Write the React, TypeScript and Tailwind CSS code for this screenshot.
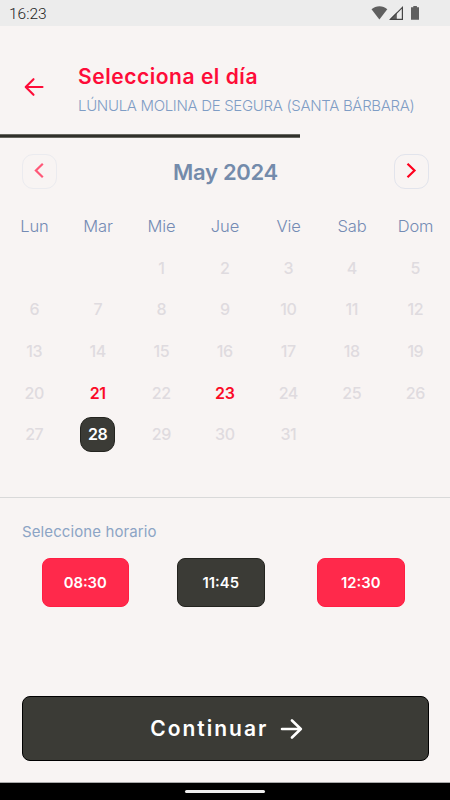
const weekdays = ["Lun", "Mar", "Mie", "Jue", "Vie", "Sab", "Dom"];

const cells: (number | null)[] = [
  null,
  null,
  ...Array.from({ length: 31 }, (_, i) => i + 1),
  null,
  null,
];

function StatusBar() {
  return (
    <div className="flex h-[26px] shrink-0 items-center justify-between bg-[#ececec] pr-[30px] pl-[9px]">
      <span className="pt-[3px] font-['Roboto',sans-serif] text-[15.5px] leading-none font-light text-[#222]">16:23</span>
      <svg width="50" height="16" viewBox="0 0 50 16" className="text-[#5f5f5f]">
        <path d="M1.5 4.3C6 .2 13 .2 17.3 4.3L9.4 14.4Z" fill="currentColor" />
        <path d="M19.5 14.5L26.8 7.2v7.3Z" fill="currentColor" />
        <path d="M20.5 14.3L32.4 2.4V14.3Z" fill="none" stroke="#444" strokeWidth="1.2" />
        <path d="M43.3 1h3.6v1.3h2.1v12.5h-8V2.3h2.3Z" fill="currentColor" />
      </svg>
    </div>
  );
}

function Header() {
  return (
    <header className="flex h-[107.5px] shrink-0 items-center pl-[24px]">
      <svg width="20" height="20" viewBox="0 0 20 20" className="mt-[14px] shrink-0" fill="none" stroke="#fe0c38" strokeWidth="2.1">
        <path d="M18.5 10H2M9.5 2.2L1.7 10l7.8 7.8" strokeLinecap="round" strokeLinejoin="round" />
      </svg>
      <div className="mt-[23px] ml-[34px] flex flex-col whitespace-nowrap">
        <h1 className="text-[21px] leading-[30px] font-semibold tracking-[0.54px] text-[#fe0c38]">Selecciona el día</h1>
        <p className="text-[15px] leading-[28px] font-light tracking-[-0.32px] text-[#7f9dc5]">LÚNULA MOLINA DE SEGURA (SANTA BÁRBARA)</p>
      </div>
    </header>
  );
}

function Chevron({ next = false }: { next?: boolean }) {
  return (
    <button className={`flex size-[35px] justify-center rounded-[11px] border pt-[7px] ${next ? "border-[#e2e4ec]" : "border-[#ebebef]"}`}>
      <svg width="12" height="17" viewBox="0 0 12 17" fill="none" stroke={next ? "#ff001e" : "#ff5878"} strokeWidth="2.2">
        <path d={next ? "M2.5 1.7L9.5 8.5l-7 6.8" : "M8.8 1.7L1.9 8.5l6.9 6.8"} />
      </svg>
    </button>
  );
}

function Day({ value }: { value: number | null }) {
  const available = value === 21 || value === 23;
  const selected = value === 28;
  return (
    <div className="flex h-[41.6px] items-center justify-center">
      <span
        className={`flex size-[35px] items-center justify-center rounded-[11px] text-[16px] tracking-[-0.4px] ${
          selected ? "border border-[#24241f] bg-[#3b3b36] font-semibold text-white" : available ? "font-semibold text-[#fb0a27]" : "font-medium text-[#dfdbdf]"
        }`}
      >
        {value}
      </span>
    </div>
  );
}

function TimeSlot({ time, selected = false }: { time: string; selected?: boolean }) {
  return (
    <button
      className={`flex h-[49px] w-[87.5px] items-center justify-center rounded-[8px] border pt-px text-[14.8px] font-semibold text-white ${
        selected ? "border-[#24241f] bg-[#3b3b36]" : "border-[#ff1e42] bg-[#ff294b]"
      }`}
    >
      {time}
    </button>
  );
}

export default function App() {
  return (
    <div className="flex h-[800px] w-[450px] flex-col overflow-hidden bg-[#f8f4f3] font-['Inter',sans-serif]">
      <StatusBar />
      <Header />
      <div className="h-[4.5px] w-[300px] shrink-0 border-y border-[#66665f] bg-[#30302a]" />

      <section className="flex h-[359px] shrink-0 flex-col">
        <div className="flex items-center justify-between pt-[16px] pr-[21px] pl-[22px]">
          <Chevron />
          <h2 className="text-[22px] leading-[34px] font-semibold tracking-[-0.3px] text-[#748bab]">May 2024</h2>
          <Chevron next />
        </div>
        <div className="mx-[2.7px] mt-[21px] grid grid-cols-7 text-center text-[16.5px] leading-[32px] font-light tracking-[-0.1px] text-[#748bb4]">
          {weekdays.map((name) => (
            <span key={name}>{name}</span>
          ))}
        </div>
        <div className="mr-[2.9px] ml-[2.5px] mt-[5px] grid grid-cols-7">
          {cells.map((value, i) => (
            <Day key={i} value={value} />
          ))}
        </div>
      </section>

      <section className="flex h-[198px] shrink-0 flex-col border-t border-[#d9d9d9]">
        <h3 className="mt-[22px] pl-[22px] text-[15px] leading-[24px] tracking-[0.1px] text-[#8ca4c5]">Seleccione horario</h3>
        <div className="mt-[14px] flex pl-[41.5px]">
          <TimeSlot time="08:30" />
          <div className="ml-[48px]">
            <TimeSlot time="11:45" selected />
          </div>
          <div className="ml-[52.5px]">
            <TimeSlot time="12:30" />
          </div>
        </div>
      </section>

      <button className="mt-[0.5px] mr-[21.5px] ml-[22px] flex h-[65px] shrink-0 items-center justify-center gap-[12px] rounded-[8px] border border-black bg-[#3b3b36] pt-px pl-[3px] text-white">
        <span className="text-[21px] font-semibold tracking-[2px]">Continuar</span>
        <svg width="23" height="20" viewBox="0 0 23 20" fill="none" stroke="currentColor" strokeWidth="2.6" strokeLinecap="round" strokeLinejoin="round">
          <path d="M2 10h18M12 1.5L20.8 10L12 18.5" />
        </svg>
      </button>

      <div className="mt-auto flex h-[18px] shrink-0 items-center justify-center border-t border-[#aaa] bg-black">
        <div className="h-[3px] w-[80px] rounded-full bg-[#eee]" />
      </div>
    </div>
  );
}
